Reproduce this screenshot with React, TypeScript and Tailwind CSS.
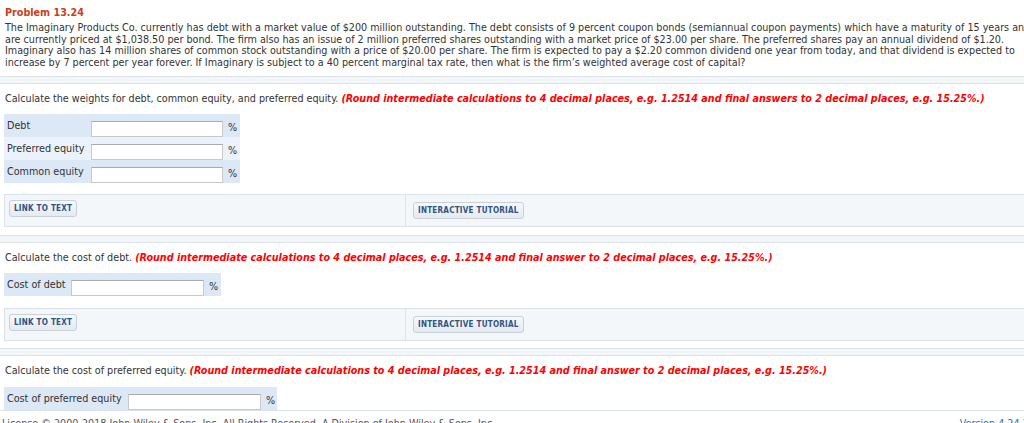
import React from "react";

const NOTE =
  "(Round intermediate calculations to 4 decimal places, e.g. 1.2514 and final answers to 2 decimal places, e.g. 15.25%.)";
const NOTE_SINGLE =
  "(Round intermediate calculations to 4 decimal places, e.g. 1.2514 and final answer to 2 decimal places, e.g. 15.25%.)";

function Band() {
  return <div className="h-[8px] w-full border-y border-[#dce2e9] bg-[#f3f6f9]" />;
}

function Question({ text, note }: { text: string; note: string }) {
  return (
    <p className="ml-[5px] leading-[12px] whitespace-nowrap text-[#333]">
      {text} <span className="font-bold italic text-[#ff0000]">{note}</span>
    </p>
  );
}

function Input({ w }: { w: string }) {
  return (
    <div
      className={`${w} mt-[7px] h-[16px] shrink-0 border border-[#c9c9c9] border-t-[#ababab] bg-white`}
    />
  );
}

function AnswerRow({
  label,
  labelW,
  inputW,
  bg,
}: {
  label: string;
  labelW: string;
  inputW: string;
  bg: string;
}) {
  return (
    <div className={`flex h-[23px] items-start pl-[3px] pr-[4px] ${bg}`}>
      <span className={`${labelW} shrink-0 pt-[6px] leading-[12px] text-[#333]`}>{label}</span>
      <Input w={inputW} />
      <span className="ml-[5px] pt-[8px] leading-[12px] text-[#333]">%</span>
    </div>
  );
}

function Btn({ children }: { children: React.ReactNode }) {
  return (
    <button className="rounded-[3px] border border-[#c8d0da] bg-gradient-to-b from-[#f7f9fb] to-[#e5eaf0] px-[4px] py-[2px] text-[8px] font-bold leading-[11px] tracking-[0.25px] text-[#2e5384]">
      {children}
    </button>
  );
}

function Tools({ pt1, pt2 }: { pt1: string; pt2: string }) {
  return (
    <div className="ml-[4px] flex h-[33px] border border-[#dce2e9] bg-[#f4f7fa]">
      <div className={`w-[401px] shrink-0 border-r border-[#dce2e9] pl-[4px] ${pt1}`}>
        <Btn>LINK TO TEXT</Btn>
      </div>
      <div className={`pl-[7px] ${pt2}`}>
        <Btn>INTERACTIVE TUTORIAL</Btn>
      </div>
    </div>
  );
}

export default function App() {
  return (
    <div className="h-[423px] w-[1024px] overflow-hidden bg-white font-['DejaVu_Sans_Condensed','DejaVu_Sans',sans-serif] text-[10.7px] text-[#333]">
      <div className="w-[1120px]">
        <h1 className="ml-[5px] pt-[7px] text-[10.7px] font-bold leading-[12px] text-[#c8401a]">
          Problem 13.24
        </h1>
        <p className="ml-[5px] mt-[3px] whitespace-nowrap leading-[11.5px] text-[#333]">
          The Imaginary Products Co. currently has debt with a market value of $200 million outstanding. The debt consists of 9 percent coupon bonds (semiannual coupon payments) which have a maturity of 15 years and
          <br />
          are currently priced at $1,038.50 per bond. The firm also has an issue of 2 million preferred shares outstanding with a market price of $23.00 per share. The preferred shares pay an annual dividend of $1.20.
          <br />
          Imaginary also has 14 million shares of common stock outstanding with a price of $20.00 per share. The firm is expected to pay a $2.20 common dividend one year from today, and that dividend is expected to
          <br />
          increase by 7 percent per year forever. If Imaginary is subject to a 40 percent marginal tax rate, then what is the firm’s weighted average cost of capital?
        </p>

        <div className="mt-[8px]">
          <Band />
        </div>

        <div className="mt-[9px]">
          <Question text="Calculate the weights for debt, common equity, and preferred equity." note={NOTE} />
        </div>

        <div className="ml-[4px] mt-[9px] w-[236px]">
          <AnswerRow label="Debt" labelW="w-[84px]" inputW="w-[132px]" bg="bg-[#dde8f7]" />
          <AnswerRow label="Preferred equity" labelW="w-[84px]" inputW="w-[132px]" bg="bg-[#ebf2fb]" />
          <AnswerRow label="Common equity" labelW="w-[84px]" inputW="w-[132px]" bg="bg-[#dde8f7]" />
        </div>

        <div className="mt-[11px]">
          <Tools pt1="pt-[5px]" pt2="pt-[7px]" />
        </div>

        <div className="mt-[8px]">
          <Band />
        </div>

        <div className="mt-[9px]">
          <Question text="Calculate the cost of debt." note={NOTE_SINGLE} />
        </div>

        <div className="ml-[4px] mt-[9px] w-[217px]">
          <AnswerRow label="Cost of debt" labelW="w-[64px]" inputW="w-[133px]" bg="bg-[#dde8f7]" />
        </div>

        <div className="mt-[12px]">
          <Tools pt1="pt-[5px]" pt2="pt-[7px]" />
        </div>

        <div className="mt-[7px]">
          <Band />
        </div>

        <div className="mt-[9px]">
          <Question text="Calculate the cost of preferred equity." note={NOTE_SINGLE} />
        </div>

        <div className="ml-[4px] mt-[10px] w-[273px]">
          <AnswerRow label="Cost of preferred equity" labelW="w-[121px]" inputW="w-[133px]" bg="bg-[#dde8f7]" />
        </div>
        <div className="h-px w-full bg-[#dce2e9]" />

        <div className="mt-[7px] flex w-[1024px] justify-between whitespace-nowrap leading-[12px]">
          <span className="ml-[2px] text-[#555]">
            License © 2000-2018 John Wiley &amp; Sons, Inc. All Rights Reserved. A Division of John Wiley &amp; Sons, Inc.
          </span>
          <span className="mr-[-20px] text-[#2b6cb0]">Version 4.24.20.1</span>
        </div>
      </div>
    </div>
  );
}
